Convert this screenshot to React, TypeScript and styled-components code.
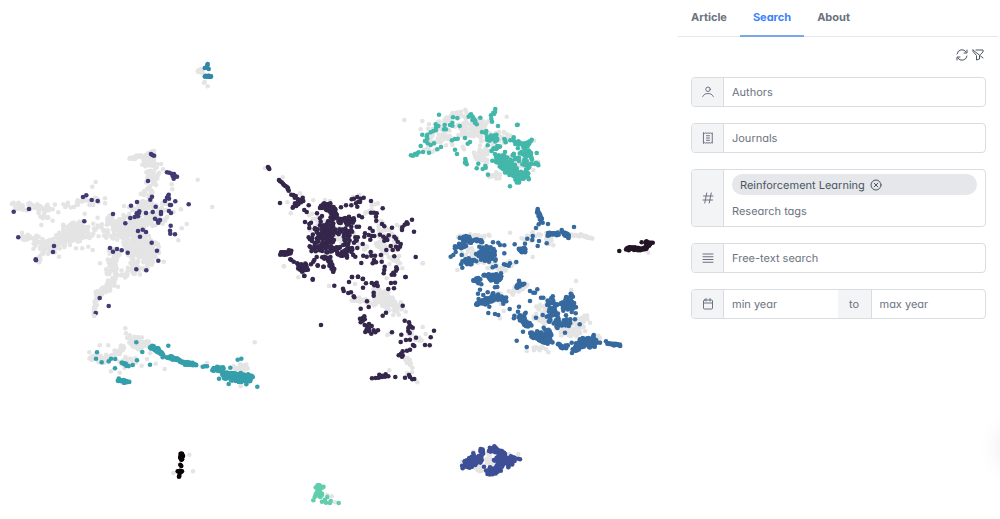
import React from "react";
import styled, { createGlobalStyle } from "styled-components";

const GlobalStyle = createGlobalStyle`
  *, *::before, *::after { box-sizing: border-box; }
  body {
    margin: 0;
    background: #fff;
    color: #6b7280;
    font-family: Inter, "Liberation Sans", sans-serif;
    font-feature-settings: "cv11";
    font-size: 11px;
    line-height: 16px;
    text-rendering: geometricPrecision;
  }
  button, input {
    font: inherit;
    font-feature-settings: inherit;
    text-rendering: inherit;
    color: inherit;
  }
`;

/* ---------- scatter map ---------- */

/* A cloud is [number of articles, spread, path the articles are scattered along]. */
type Cloud = [number, number, string];

interface Layer {
  color: string;
  origin: [number, number];
  dots: string;
  clouds: Cloud[];
}

const GREY = "#e4e4e4";
const UNIT = 3;

const layers: Layer[] = [
  {
    color: GREY,
    origin: [0, 130],
    dots: "593,149 637,231 287,156 277,170 560,282 535,331 543,238 491,395 517,178 515,163 124,285 175,247 300,400 278,360 254,251 265,350 247,355 185,317 177,380 190,223 202,225 315,205 315,220 372,228 354,470 370,255 483,102 489,118 545,295 210,345 228,355 238,275 220,280",
    clouds: [
      [40, 13, "44,222 60,232 160,232"],
      [22, 14, "205,224 250,220 300,212"],
      [10, 10, "115,255 155,265"],
      [24, 14, "65,320 110,330"],
      [110, 25, "110,340 150,350 200,322 270,300"],
      [16, 7, "110,398 125,370 160,350"],
      [90, 30, "190,310 250,300"],
      [140, 36, "305,290 380,300 430,290"],
      [90, 36, "400,260 470,250 490,240"],
      [70, 22, "430,240 445,180 460,130 450,100"],
      [26, 5, "385,85 430,78 465,65"],
      [30, 14, "430,100 455,95 460,75"],
      [210, 42, "380,300 420,350 430,400"],
      [60, 20, "340,360 335,440"],
      [50, 13, "340,450 325,475 290,490"],
      [18, 6, "290,505 284,555"],
      [16, 16, "400,425 365,430"],
      [26, 20, "460,370 455,330"],
    ],
  },
  {
    color: "#403a75",
    origin: [0, 130],
    dots: "41,245 87,237 55,322 162,348 159,366 108,391 107,388 253,274 249,201 259,196 275,210 293,213 339,252 376,280 391,264 404,261 412,256 418,244 410,250 414,259 416,250 393,227 411,216 438,249 458,246 467,230 451,209 456,200 444,153 453,72 462,77 457,75 501,127 508,128 515,131 522,132 518,138 525,138 531,140 521,146 566,223 526,214 506,194 501,203 495,213 507,206 504,199 510,225 513,225 507,243 513,249 483,246 483,252 465,266 473,272 480,270 475,278 512,287 510,302 511,311 525,313 414,303 428,299 438,306 420,320 455,338 471,362 475,392 330,354 339,365 351,357 365,361 383,368 409,418 439,421 299,504 326,528 287,549",
    clouds: [],
  },
  {
    color: GREY,
    origin: [70, 310],
    dots: "73,18 58,127 89,106 115,106 166,55 168,70 215,167 231,147 257,161 284,177 149,188 123,184 554,97 411,159 512,229 240,130 358,434 369,484 310,489",
    clouds: [
      [60, 19, "185,88 205,98 225,108"],
      [24, 12, "64,145 100,150"],
      [34, 14, "105,150 135,130 155,112"],
      [18, 16, "150,165 190,145"],
      [26, 13, "497,168 530,178"],
    ],
  },
  {
    color: "#359fab",
    origin: [70, 310],
    dots: "295,107 199,97 217,126 201,151 188,165 240,164 81,127 78,146 95,157 116,154 123,146 136,147 135,175 278,142 398,170 404,169 411,169 481,173 503,149 514,146 447,206 476,222 529,223 562,230 512,189 545,197",
    clouds: [
      [10, 3, "156,157 175,168"],
      [18, 5, "145,208 165,216 176,214"],
      [34, 6, "243,112 260,118 276,135"],
      [48, 5, "292,140 320,150 345,160 378,164"],
      [26, 8, "428,177 460,178"],
      [140, 13, "465,193 500,203 540,205"],
    ],
  },
  {
    color: "#0b0405",
    origin: [70, 310],
    dots: "331,464 334,468 328,497 327,500 339,438",
    clouds: [
      [20, 4, "334,428 333,450"],
      [10, 4, "325,486 334,485"],
    ],
  },
  {
    color: GREY,
    origin: [250, 150],
    dots: "45,55 98,82 122,190 112,157 190,151 225,150 240,153 518,340 101,349 450,230 440,225 328,135 310,140 410,385 150,130",
    clouds: [
      [20, 18, "180,200 220,220 190,250"],
      [40, 24, "380,230 440,280"],
      [40, 24, "340,290 400,300 440,330"],
      [10, 14, "340,185 380,170"],
      [26, 30, "210,270 300,250"],
    ],
  },
  {
    color: GREY,
    origin: [270, 260],
    dots: "42,19 85,52 177,78 255,72 458,10 397,25 390,10 458,201 467,222 407,155 352,225 358,222 427,323 426,337 442,367 358,331 412,340 370,165",
    clouds: [
      [90, 26, "320,100 350,120 385,145"],
      [24, 11, "240,115 280,125 325,132"],
      [10, 9, "440,235 455,245"],
      [14, 8, "410,290 416,310"],
      [10, 8, "425,200 420,230"],
    ],
  },
  {
    color: "#35264c",
    origin: [250, 150],
    dots: "56,54 58,57 54,51 87,90 90,94 95,97 99,101 102,105 106,108 110,110 114,114 114,118 116,122 90,159 124,134 130,135 137,138 134,143 143,147 158,143 160,153 150,150 153,157 143,156 135,160 130,170 139,168 145,163 128,173 176,166 163,180 170,186 201,190 165,216 178,222 183,218 178,234 273,172 288,166 304,166 305,148 312,146 322,141 332,146 341,143 325,155 318,160 322,170 330,156 363,153 398,175 297,200 327,197 336,202 294,212 363,188 372,188 380,190 378,200 379,212 396,222 403,229 426,233 486,209 470,217 464,224 457,232 456,240 473,221 492,245 360,235 368,243 345,250 356,255 365,258 343,260 373,258 361,269 390,254 400,260 408,265 416,256 403,272 412,270 433,260 438,266 443,275 452,282 450,290 438,290 422,288 428,300 409,300 444,298 338,282 340,317 350,320 362,306 364,317 375,317 393,315 395,335 378,337 368,340 372,330 334,339 433,319 497,321 176,262 180,268 186,273 210,205 216,198 212,215 320,230 327,230 304,230 306,294 322,294 316,320 190,335 183,343 193,330 203,347 200,321 221,350 121,328 124,330 131,335 163,378 188,387 404,350 403,360 401,370 439,352 438,362 430,368 425,374 433,374 441,357 467,381 306,381 324,380 339,386 275,240 262,248 195,235 200,245 230,240 248,228 316,262 312,278 280,285 250,300 235,215 226,228",
    clouds: [
      [46, 12, "217,168 240,170 250,195"],
      [44, 11, "250,190 260,205 285,215 310,215"],
      [44, 20, "205,238 240,225 235,255"],
      [34, 20, "200,260 240,275"],
      [36, 21, "262,245 308,262 298,278"],
      [36, 16, "188,300 210,285 245,300"],
      [40, 17, "262,305 290,300 295,318"],
      [24, 8, "220,324 240,328 240,345 252,362"],
      [20, 6, "90,308 105,314 122,302"],
      [30, 12, "148,347 165,352 157,362"],
    ],
  },
  {
    color: "#35264c",
    origin: [270, 260],
    dots: "103,47 128,59 143,16 160,20 193,77 246,51 264,50 278,57 237,66 288,70 279,83 305,69 313,76 320,68 323,78 312,72 363,69 375,68 355,87 372,85 406,51 311,98 311,107 219,86 221,93 235,99 243,97 251,109 253,112 291,124 296,141 272,146 348,158 338,167 398,137 283,169 270,176 278,174 278,182 272,187 284,178 284,195 292,199 297,192 305,198 290,208 286,216 297,214 304,221 311,211 316,217 324,211 297,206 153,195 366,217 394,224 392,246 404,182 417,187 419,196 428,203 415,204 415,213 419,219 423,200 438,233 408,240 420,239 429,255 433,258 420,269 411,272 398,274 393,281 386,286 398,286 396,290 492,212 482,232 465,255 479,256 306,355 317,354 328,344 326,353 338,347 345,350 347,343 336,351 331,349 355,349 376,351 405,353 417,345 420,351 427,358 433,357",
    clouds: [],
  },
  {
    color: GREY,
    origin: [390, 90],
    dots: "43,90 97,93 226,59 350,80 92,118 117,103 222,178 218,170 168,166 430,240 415,265 445,215 432,152",
    clouds: [
      [38, 17, "125,150 160,145 180,155"],
      [100, 28, "215,112 250,112 280,115"],
      [26, 13, "150,95 180,80 225,75"],
      [20, 16, "125,110 170,125"],
      [28, 18, "255,195 290,185 285,210"],
      [14, 12, "300,250 325,262"],
      [34, 22, "280,155 330,145 350,135"],
      [20, 20, "370,215 410,230"],
      [12, 9, "105,175 130,180"],
    ],
  },
  {
    color: "#43b7aa",
    origin: [390, 90],
    dots: "316,57 315,66 310,68 312,72 303,76 304,86 306,95 324,108 383,104 381,105 147,74 189,82 202,84 187,98 180,105 187,107 209,108 137,103 145,108 138,113 137,121 130,123 122,127 112,134 110,140 97,134 164,105 162,118 168,118 112,146 105,153 113,160 122,165 132,160 92,168 142,178 153,171 117,188 99,186 63,196 69,197 75,192 82,190 86,187 80,194 186,151 195,147 203,146 225,144 233,161 240,156 195,179 201,192 226,207 227,214 230,223 225,218 265,221 260,235 286,228 287,233 278,237 294,254 360,289 440,189 425,149 271,83 241,75 243,73 248,80 236,80 251,86 247,90 256,92 255,98 260,103 276,126 289,123 287,130 292,140 343,147 347,157 345,150 371,142 370,150 361,151 301,140 293,166 345,186 435,222 445,226 438,218 443,221",
    clouds: [
      [20, 10, "298,148 310,138 325,150"],
      [10, 4, "305,180 330,168"],
      [14, 6, "375,155 392,162"],
      [16, 8, "405,168 420,160"],
      [90, 21, "325,208 350,222 365,242"],
      [34, 14, "360,245 385,250 410,260"],
      [44, 17, "395,180 410,190 418,210 405,240"],
      [16, 8, "378,260 388,275"],
      [10, 9, "372,200 385,205"],
    ],
  },
  {
    color: GREY,
    origin: [430, 190],
    dots: "240,128 308,201 438,273 424,300 370,166 82,240 655,188 221,363 472,387 480,398 355,487 290,483 210,385",
    clouds: [
      [22, 4, "425,135 450,136 470,140 485,145"],
      [14, 12, "350,130 365,155"],
      [24, 10, "85,140 140,138 178,143"],
      [44, 24, "110,190 180,215"],
      [10, 9, "225,235 250,215"],
      [16, 10, "215,240 190,230"],
      [20, 12, "242,308 290,285"],
      [12, 12, "200,310 210,335"],
      [30, 20, "335,350 330,390"],
      [60, 24, "390,415 450,410"],
      [22, 18, "460,385 430,440"],
      [10, 8, "310,475 345,478"],
      [12, 12, "495,445 515,450"],
      [14, 12, "280,150 330,130"],
    ],
  },
  {
    color: "#366a9f",
    origin: [430, 190],
    dots: "323,57 338,98 326,103 318,114 354,102 432,111 395,120 396,126 350,160 308,138 307,150 292,146 327,153 323,168 285,161 254,163 223,166 223,190 205,158 210,165 189,157 259,216 240,220 236,227 222,223 228,225 62,200 70,195 77,186 75,175 95,195 148,170 97,233 177,215 196,212 188,232 197,228 213,250 145,280 154,283 202,291 195,292 150,299 144,311 160,315 173,307 229,334 220,341 178,350 175,369 195,372 205,375 239,357 267,272 283,281 300,303 310,308 322,298 315,308 333,323 340,323 300,333 267,350 264,365 287,368 284,372 318,383 260,452 290,471 426,489 428,478 279,425 341,413 405,428 449,403 338,375 350,380 437,370 435,388 421,388 408,376 491,435 510,458 528,454 425,458 380,345 392,342 400,362 425,366 385,385",
    clouds: [
      [20, 4, "323,62 329,78 334,94"],
      [18, 5, "350,133 385,132"],
      [18, 7, "402,130 415,138"],
      [24, 9, "270,180 286,182"],
      [12, 7, "92,150 118,142"],
      [22, 8, "108,155 135,152 155,155"],
      [18, 8, "80,170 105,166"],
      [64, 20, "155,198 175,186 188,195"],
      [28, 10, "98,218 130,212"],
      [14, 4, "156,253 205,257"],
      [14, 6, "134,270 150,267"],
      [26, 8, "178,265 200,270 212,262"],
      [54, 10, "142,335 170,335 190,320 222,324"],
      [12, 6, "262,288 275,284"],
      [22, 9, "258,380 275,385 278,400"],
      [18, 8, "285,400 302,405"],
      [60, 14, "308,430 335,440 355,455"],
      [16, 8, "350,420 358,440"],
      [46, 16, "365,330 370,375 372,395"],
      [36, 12, "375,405 400,400 418,397"],
      [22, 9, "395,350 405,340 412,360"],
      [44, 12, "420,318 415,335 432,350"],
      [14, 5, "385,460 400,475 412,468"],
      [70, 13, "435,475 465,452 488,464"],
      [10, 5, "490,440 500,460"],
      [20, 3, "530,461 572,466"],
    ],
  },
  {
    color: "#231526",
    origin: [430, 190],
    dots: "568,183 635,157 596,181 668,158",
    clouds: [
      [44, 5, "590,174 635,178 655,168"],
      [22, 6, "648,158 664,164"],
    ],
  },
  {
    color: GREY,
    origin: [440, 430],
    dots: "66,95 165,50 120,120 208,72 235,72 100,65",
    clouds: [
      [20, 9, "145,92 155,100"],
      [8, 6, "110,112 128,122"],
      [6, 6, "145,70 150,76"],
    ],
  },
  {
    color: "#3e4f97",
    origin: [440, 430],
    dots: "68,115 235,86 240,88 100,70 150,112 162,90 165,92 163,49 122,57 205,112 132,110",
    clouds: [
      [90, 14, "78,108 100,92 116,88"],
      [14, 5, "124,60 128,70"],
      [36, 8, "150,60 178,62 188,74"],
      [90, 13, "178,85 205,95 218,90"],
      [54, 10, "142,122 155,128 178,118 180,98"],
    ],
  },
  {
    color: GREY,
    origin: [170, 50],
    dots: "102,98 113,109 104,96",
    clouds: [[16, 6, "84,62 98,66"]],
  },
  {
    color: "#3487a6",
    origin: [170, 50],
    dots: "113,42 112,46 104,54 116,57 112,53",
    clouds: [[12, 2, "105,79 124,78"]],
  },
  {
    color: GREY,
    origin: [300, 475],
    dots: "82,60 95,64 105,82",
    clouds: [],
  },
  {
    color: "#60ceac",
    origin: [300, 475],
    dots: "40,76 44,66 92,78 90,84 116,84 82,66 75,74 66,80 78,83",
    clouds: [
      [16, 7, "48,36 66,38"],
      [14, 8, "52,52 64,66"],
    ],
  },
];

function seeded(seed: number) {
  let s = seed;
  return () => {
    s = (s + 0x6d2b79f5) | 0;
    let t = Math.imul(s ^ (s >>> 15), 1 | s);
    t = (t + Math.imul(t ^ (t >>> 7), 61 | t)) ^ t;
    return ((t ^ (t >>> 14)) >>> 0) / 4294967296;
  };
}

const parse = (s: string) => s.split(" ").map((p) => p.split(",").map(Number));

function scatter([count, spread, track]: Cloud, random: () => number) {
  const pts = parse(track);
  const lengths = pts.slice(1).map((p, i) => Math.hypot(p[0] - pts[i][0], p[1] - pts[i][1]));
  const total = lengths.reduce((a, b) => a + b, 0);
  return Array.from({ length: count }, (_, n) => {
    let d = ((n + 0.5) / count) * total;
    let i = 0;
    while (i < lengths.length - 1 && d > lengths[i]) d -= lengths[i++];
    const t = d / lengths[i];
    const angle = random() * Math.PI * 2;
    const r = Math.sqrt(random()) * spread;
    return [
      pts[i][0] + (pts[i + 1][0] - pts[i][0]) * t + Math.cos(angle) * r,
      pts[i][1] + (pts[i + 1][1] - pts[i][1]) * t + Math.sin(angle) * r,
    ];
  });
}

const drawn = layers.map((layer, index) => {
  const random = seeded(index + 11);
  const points = [...parse(layer.dots), ...layer.clouds.flatMap((c) => scatter(c, random))];
  return {
    color: layer.color,
    points: points.map(([x, y]) => [layer.origin[0] + x / UNIT, layer.origin[1] + y / UNIT]),
  };
});

const Page = styled.div`
  display: flex;
  align-items: flex-start;
  min-height: 100vh;
  position: relative;
  overflow: hidden;
`;

const MapArea = styled.main`
  flex: 1;
  min-width: 0;
`;

const MapCanvas = styled.svg`
  display: block;
  width: 100%;
  height: auto;
`;

const ArticleMap = () => (
  <MapCanvas viewBox="0 0 678 519" role="img" aria-label="Map of articles">
    {drawn.map((layer, i) => (
      <g key={i} fill={layer.color}>
        {layer.points.map(([x, y], j) => (
          <circle key={j} cx={x.toFixed(1)} cy={y.toFixed(1)} r="2.3" />
        ))}
      </g>
    ))}
  </MapCanvas>
);

/* ---------- side panel ---------- */

const Panel = styled.aside`
  flex: 0 0 322px;
`;

const Tabs = styled.div`
  display: flex;
  height: 37px;
  margin-right: 2px;
  box-shadow: inset 0 -1px #e5e7eb;
`;

const Tab = styled.button<{ $active?: boolean }>`
  height: 37px;
  padding: 0 13px 2px;
  border: 0;
  border-bottom: 2px solid ${(p) => (p.$active ? "#76a9ea" : "transparent")};
  background: none;
  font-weight: 700;
  color: ${(p) => (p.$active ? "#3b82f6" : "#6b7280")};
`;

const Form = styled.form`
  display: flex;
  flex-direction: column;
  gap: 16px;
  padding: 12px 14px 0 13px;
`;

const Actions = styled.div`
  display: flex;
  justify-content: flex-end;
  gap: 4px;
  height: 12px;
  padding-right: 2px;
`;

const IconButton = styled.button`
  display: flex;
  padding: 0;
  border: 0;
  background: none;
  color: #4b5563;
`;

const Field = styled.div`
  display: flex;
  min-height: 30px;
  border: 1px solid #d9dce1;
  border-radius: 4px;
  overflow: hidden;
`;

const Addon = styled.label<{ $between?: boolean }>`
  display: flex;
  align-items: center;
  justify-content: center;
  flex: 0 0 ${(p) => (p.$between ? 34 : 32)}px;
  background: #f3f4f6;
  border-right: 1px solid #d9dce1;
`;

const Input = styled.input`
  flex: 1;
  width: 100%;
  min-width: 0;
  padding: 0 8px;
  border: 0;
  outline: 0;
  background: none;
  &::placeholder { color: #6b7280; opacity: 1; }
`;

const TagArea = styled.div`
  display: flex;
  flex-direction: column;
  flex: 1;
  padding-top: 4px;
`;

const Tag = styled.span`
  display: flex;
  align-items: center;
  gap: 5px;
  height: 21px;
  margin: 0 8px;
  padding: 0 8px;
  border-radius: 11px;
  background: #e5e7eb;
  color: #4b5563;
`;

const TagInput = styled(Input)`
  flex: 0 0 31px;
`;

const FloatingHint = styled.div`
  position: absolute;
  top: 430px;
  right: -40px;
  width: 36px;
  height: 36px;
  border-radius: 18px;
  box-shadow: 0 0 26px 2px rgba(0, 0, 0, 0.12);
`;

const Icon = ({ children }: { children: React.ReactNode }) => (
  <svg
    width="12"
    height="12"
    viewBox="0 0 24 24"
    fill="none"
    stroke="currentColor"
    strokeWidth="2"
    strokeLinecap="round"
    strokeLinejoin="round"
    aria-hidden="true"
  >
    {children}
  </svg>
);

export default function App() {
  return (
    <>
      <GlobalStyle />
      <Page>
        <MapArea>
          <ArticleMap />
        </MapArea>
        <Panel>
          <Tabs role="tablist">
            <Tab role="tab">Article</Tab>
            <Tab role="tab" aria-selected $active>Search</Tab>
            <Tab role="tab">About</Tab>
          </Tabs>
          <Form onSubmit={(e) => e.preventDefault()}>
            <Actions>
              <IconButton type="button" aria-label="Refresh">
                <Icon>
                  <path d="M2 10a10.200 10.200 0 0 1 18.500-4M22 14a10.200 10.200 0 0 1-18.500 4" />
                  <path d="M22 2v6h-6M2 22v-6h6" />
                </Icon>
              </IconButton>
              <IconButton type="button" aria-label="Clear filters">
                <Icon>
                  <path d="M8 2h14v4l-5 5M2 2v3l7 8v9l6-2v-6M2 2l20 16" />
                </Icon>
              </IconButton>
            </Actions>
            <Field>
              <Addon htmlFor="authors" aria-label="Authors">
                <Icon>
                  <circle cx="12" cy="6.5" r="4.5" />
                  <path d="M1.5 21c2-4.500 6-6 10.500-6s8.500 1.500 10.500 6" />
                </Icon>
              </Addon>
              <Input id="authors" placeholder="Authors" />
            </Field>
            <Field>
              <Addon htmlFor="journals" aria-label="Journals">
                <Icon>
                  <path d="M3.500 1.500l2 1.500 2.200-1.500L9.900 3 12 1.500 14.100 3l2.200-1.500L18.500 3l2-1.500v21l-2-1.500-2.200 1.500-2.200-1.500L12 22.500 9.900 21l-2.200 1.500L5.500 21l-2 1.500z" />
                  <path d="M9 7.500h6M9 12h6M9 16.500h6" />
                </Icon>
              </Addon>
              <Input id="journals" placeholder="Journals" />
            </Field>
            <Field>
              <Addon htmlFor="tags" aria-label="Research tags">
                <Icon>
                  <path d="M9.500 2L5.500 22M18.500 2l-4 20M3 8h19M2 16h19" />
                </Icon>
              </Addon>
              <TagArea>
                <Tag>
                  Reinforcement Learning
                  <IconButton type="button" aria-label="Remove Reinforcement Learning">
                    <Icon>
                      <circle cx="12" cy="12" r="10" />
                      <path d="M8.500 8.500l7 7M15.500 8.500l-7 7" />
                    </Icon>
                  </IconButton>
                </Tag>
                <TagInput id="tags" placeholder="Research tags" />
              </TagArea>
            </Field>
            <Field>
              <Addon htmlFor="text" aria-label="Free-text search">
                <Icon>
                  <path d="M2 4h20M2 9.500h20M2 15h20M2 20.500h20" />
                </Icon>
              </Addon>
              <Input id="text" placeholder="Free-text search" />
            </Field>
            <Field>
              <Addon htmlFor="min" aria-label="Minimum year">
                <Icon>
                  <rect x="3" y="4" width="18" height="18" rx="2" />
                  <path d="M3 10h18M8 1v5M16 1v5" />
                </Icon>
              </Addon>
              <Input id="min" placeholder="min year" />
              <Addon htmlFor="max" $between>to</Addon>
              <Input id="max" placeholder="max year" />
            </Field>
          </Form>
        </Panel>
        <FloatingHint />
      </Page>
    </>
  );
}
